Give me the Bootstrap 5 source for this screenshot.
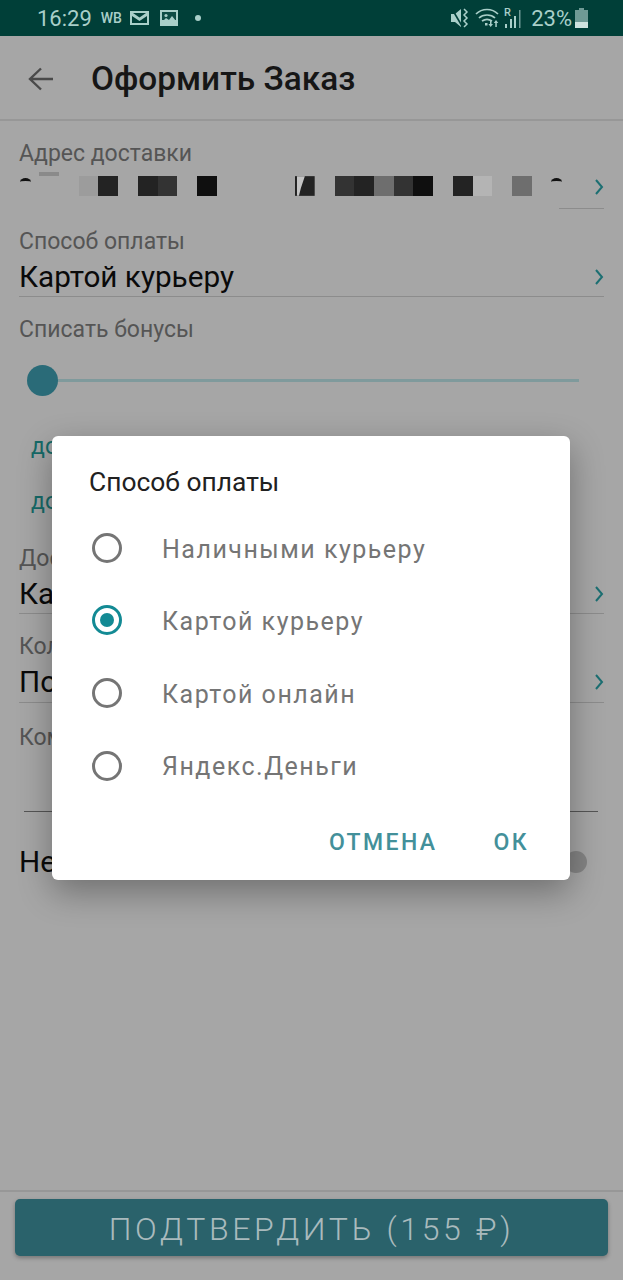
<!DOCTYPE html>
<html lang="ru">
<head>
    <meta charset="UTF-8">
    <meta name="viewport" content="width=device-width, initial-scale=1.0">
    <title>Оформить Заказ</title>
    <link href="https://cdn.jsdelivr.net/npm/bootstrap@5.3.0/dist/css/bootstrap.min.css" rel="stylesheet">
    <style>
        html, body { height: 1280px; overflow: hidden; }
        body { background-color: #a6a6a6; font-family: Roboto, "Liberation Sans", sans-serif; position: relative; }

        .status-bar { height: 36px; background-color: #003f38; color: #a9cfc9; padding: 0 35px 0 37px; }
        .status-time { font-size: 22px; margin-right: 9px; }
        .status-wb { font-size: 14px; font-weight: 500; margin-right: 8px; }
        .status-pct { font-size: 22px; margin-right: 3px; }
        .status-dot { width: 6px; height: 6px; background: #a9cfc9; margin-left: 17px; }
        .status-mail { margin-right: 11px; }
        .status-mute { margin-right: 6px; }
        .status-wifi { margin-right: 5px; }
        .status-signal { margin-right: 10px; }

        .top-bar { height: 85px; padding-left: 28px; padding-top: 3px; border-bottom: 2px solid #979797; }
        .top-title { font-size: 33.4px; font-weight: 500; color: #161616; margin-left: 38px; }

        .form-area { padding: 18px 19px 0; position: relative; }
        .field { height: 70px; margin-bottom: 18px; }
        .field-label { font-size: 23px; line-height: 30px; color: #555; }
        .field-value { font-size: 29.7px; line-height: 36px; color: #0a0a0a; margin-top: 2px; }
        .field-line { border-bottom: 1px solid #8c8c8c; }
        .short-line { width: 45px; margin-left: auto; }

        .pixel-row { height: 36px; margin: 3px 0 0 .7px; padding-top: 4px; }
        .pixel { flex: 0 0 19.7px; height: 20px; }
        .px-black { background: #0f0f0f; }
        .px-dark { background: #232323; }
        .px-mid { background: #333; }
        .px-gray { background: #6e6e6e; }
        .px-pale { background: #9c9c9c; }
        .px-light { background: #b4b4b4; }
        .frag-arc { display: block; width: 11px; height: 8px; margin-top: 2px; border-top: 3px solid #111; border-radius: 50%; }
        .pixel-dash { position: absolute; left: 39px; top: 51px; width: 20px; height: 4px; background: #8a8a8a; }

        .chevron { width: 9px; height: 16px; margin-left: auto; }
        .pixel-row .chevron { margin-top: 3px; }

        .slider-box { height: 31px; margin: 20px 25px 0 8px; position: relative; }
        .slider-track { position: absolute; left: 15px; right: 0; top: 14px; height: 3px; background: #7f9a9c; }
        .slider-thumb { position: absolute; left: 0; top: 0; width: 31px; height: 31px; border-radius: 50%; background: #2a6b78; }

        .link-text { font-size: 23px; line-height: 30px; color: #166a68; margin-left: 12px; }
        .link-first { margin-top: 36px; }
        .link-next { margin-top: 25px; }
        .field-after-links { margin-top: 27px; }
        .field-last { height: 71px; margin-bottom: 20px; }
        .comment-line { height: 1px; background: #555; margin: 58px 6px 0 5px; }
        .switch-row { margin-top: 35px; height: 30px; }
        .switch-knob { width: 22px; height: 22px; margin-left: auto; margin-right: 17px; border-radius: 50%; background: #848484; }

        .bottom-bar { position: absolute; left: 0; right: 0; bottom: 0; height: 90px; border-top: 2px solid #979797; padding: 7px 15px 0; }
        .confirm-btn { width: 100%; height: 57px; font-size: 32px; font-weight: 300; letter-spacing: 3.65px; border: 0; border-radius: 5px; box-shadow: 0 2px 4px rgba(0,0,0,.3); }
        .confirm-btn:disabled { background: #2a626b; color: #a9babd; opacity: 1; }

        .pay-dialog { position: absolute; left: 52px; top: 436px; width: 518px; height: 444px; border-radius: 6px; box-shadow: 0 12px 34px rgba(0,0,0,.33); padding: 28px 37px 0; }
        .dialog-title { font-size: 26.4px; line-height: 36px; color: #212121; }
        .option-list { margin-top: 13px; }
        .pay-option { height: 72.6px; }
        .pay-option svg { width: 30px; height: 30px; margin: -3px 40px 0 3px; }
        .pay-option span { font-size: 25px; letter-spacing: 1.5px; color: #757575; }
        .dialog-actions { margin-top: 25px; padding-right: 4px; gap: 56px; }
        .dialog-btn { font-size: 23px; font-weight: 500; letter-spacing: 2.4px; color: #43909a; padding: 0; border: 0; line-height: 30px; }
    </style>
</head>
<body>

    <!-- status bar -->
    <div class="status-bar d-flex align-items-center">
        <span class="status-time">16:29</span>
        <span class="status-wb">WB</span>
        <svg class="status-mail" width="19" height="14" viewBox="0 0 19 14"><path fill="#a9cfc9" fill-rule="evenodd" d="M0 0h19v14H0zM2 5v7h15V5l-7.500 5zM3 2l6.500 4.500L16 2z"/></svg>
        <svg width="18" height="16" viewBox="0 0 18 16"><rect width="18" height="16" fill="#a9cfc9"/><rect x="2" y="2" width="14" height="8" fill="#0f4d46"/><circle cx="6" cy="5.500" r="1.600" fill="#a9cfc9"/><path fill="#a9cfc9" d="M2 12l4-4 3 2 3-4 4 5v3H2z"/></svg>
        <span class="rounded-circle status-dot"></span>
        <div class="ms-auto d-flex align-items-center">
            <svg class="status-mute" width="18" height="20" viewBox="0 0 18 20"><path fill="#a9cfc9" d="M0 6h4l6-5v18l-6-5H0z"/><path fill="none" stroke="#a9cfc9" stroke-width="1.500" d="M13 1l3 3-3 3 3 3-3 3 3 3-3 3"/><path stroke="#003f38" stroke-width="1.600" d="M1 1l10 17"/></svg>
            <svg class="status-wifi" width="24" height="20" viewBox="0 0 24 20"><g fill="none" stroke="#a9cfc9" stroke-width="1.700"><path d="M1 6c6-6 16-6 22 0"/><path d="M4 10c4-4 12-4 16 0"/><path d="M7 13c3-2 7-2 10 0"/></g><path fill="#a9cfc9" d="M10 15h2.500v2.500H10zM15 12h1.500v4H18l-2.300 3-2.300-3H15zM21 12l2.300 3h-1.500v4h-1.500v-4h-1.500z"/></svg>
            <svg class="status-signal" width="17" height="22" viewBox="0 0 17 22"><text x="0" y="9" font-size="11" font-family="Roboto" font-weight="500" fill="#a9cfc9">R</text><path fill="#a9cfc9" d="M1 17h2v4H1zM6 12h2v9H6zM10 9h2v12h-2z"/><path fill="#6f9a95" d="M15 3h1.500v18H15z"/></svg>
            <span class="status-pct">23%</span>
            <svg width="13" height="20" viewBox="0 0 13 20"><path fill="#6f9a95" d="M4 0h5v2h4v18H0V2h4z"/><path fill="#cfe3df" d="M0 14h13v6H0z"/></svg>
        </div>
    </div>

    <!-- toolbar -->
    <div class="top-bar d-flex align-items-center">
        <svg width="25" height="24" viewBox="0 0 25 24"><path fill="none" stroke="#4a4a4a" stroke-width="2.400" d="M25 12H3M13 1.500L2 12l11 10.500"/></svg>
        <span class="top-title">Оформить Заказ</span>
    </div>

    <!-- form -->
    <div class="form-area">
        <span class="pixel-dash"></span>
        <div class="field">
            <div class="field-label">Адрес доставки</div>
            <div class="pixel-row d-flex align-items-start">
                <span class="pixel"><span class="frag-arc"></span></span><span class="pixel"></span><span class="pixel"></span>
                <span class="pixel px-pale"></span><span class="pixel px-dark"></span><span class="pixel"></span>
                <span class="pixel px-dark"></span><span class="pixel px-mid"></span><span class="pixel"></span>
                <span class="pixel px-black"></span><span class="pixel"></span><span class="pixel"></span>
                <span class="pixel"></span><span class="pixel"></span>
                <svg class="pixel" viewBox="0 0 20 20"><rect width="20" height="20" fill="#232323"/><path fill="#c4c4c4" d="M2 0h8L6 12l-2 8H2z"/></svg>
                <span class="pixel"></span><span class="pixel px-mid"></span><span class="pixel px-dark"></span>
                <span class="pixel px-gray"></span><span class="pixel px-mid"></span><span class="pixel px-black"></span>
                <span class="pixel"></span><span class="pixel px-dark"></span><span class="pixel px-light"></span>
                <span class="pixel"></span><span class="pixel px-gray"></span><span class="pixel"></span>
                <span class="pixel"><span class="frag-arc"></span></span>
                <svg class="chevron" viewBox="0 0 9 16"><path fill="none" stroke="#1c6f72" stroke-width="2" d="M1 1l6 7-6 7"/></svg>
            </div>
            <div class="field-line short-line"></div>
        </div>
        <div class="field field-line">
            <div class="field-label">Способ оплаты</div>
            <div class="field-value d-flex align-items-center">Картой курьеру
                <svg class="chevron" viewBox="0 0 9 16"><path fill="none" stroke="#1c6f72" stroke-width="2" d="M1 1l6 7-6 7"/></svg>
            </div>
        </div>
        <div class="field-label">Списать бонусы</div>
        <div class="slider-box">
            <div class="slider-track"></div>
            <div class="slider-thumb"></div>
        </div>
        <div class="link-text link-first">до</div>
        <div class="link-text link-next">до</div>
        <div class="field field-line field-after-links">
            <div class="field-label">Дос</div>
            <div class="field-value d-flex align-items-center">Ка
                <svg class="chevron" viewBox="0 0 9 16"><path fill="none" stroke="#1c6f72" stroke-width="2" d="M1 1l6 7-6 7"/></svg>
            </div>
        </div>
        <div class="field field-line field-last">
            <div class="field-label">Кол</div>
            <div class="field-value d-flex align-items-center">По
                <svg class="chevron" viewBox="0 0 9 16"><path fill="none" stroke="#1c6f72" stroke-width="2" d="M1 1l6 7-6 7"/></svg>
            </div>
        </div>
        <div class="field-label">Ком</div>
        <div class="comment-line"></div>
        <div class="switch-row field-value d-flex align-items-center">Не
            <span class="switch-knob"></span>
        </div>
    </div>

    <!-- bottom button -->
    <div class="bottom-bar">
        <button type="button" class="btn confirm-btn" disabled>ПОДТВЕРДИТЬ (155 ₽)</button>
    </div>

    <!-- dialog -->
    <div class="pay-dialog bg-white">
        <div class="dialog-title">Способ оплаты</div>
        <div class="option-list">
            <div class="pay-option d-flex align-items-center">
                <svg viewBox="0 0 30 30"><circle cx="15" cy="15" r="13.500" fill="none" stroke="#757575" stroke-width="3"/></svg>
                <span>Наличными курьеру</span>
            </div>
            <div class="pay-option d-flex align-items-center">
                <svg viewBox="0 0 30 30"><circle cx="15" cy="15" r="13.500" fill="none" stroke="#138a94" stroke-width="3"/><circle cx="15" cy="15" r="7" fill="#138a94"/></svg>
                <span>Картой курьеру</span>
            </div>
            <div class="pay-option d-flex align-items-center">
                <svg viewBox="0 0 30 30"><circle cx="15" cy="15" r="13.500" fill="none" stroke="#757575" stroke-width="3"/></svg>
                <span>Картой онлайн</span>
            </div>
            <div class="pay-option d-flex align-items-center">
                <svg viewBox="0 0 30 30"><circle cx="15" cy="15" r="13.500" fill="none" stroke="#757575" stroke-width="3"/></svg>
                <span>Яндекс.Деньги</span>
            </div>
        </div>
        <div class="dialog-actions d-flex justify-content-end">
            <button type="button" class="btn dialog-btn">ОТМЕНА</button>
            <button type="button" class="btn dialog-btn">ОК</button>
        </div>
    </div>

    <script src="https://cdn.jsdelivr.net/npm/bootstrap@5.3.0/dist/js/bootstrap.bundle.min.js"></script>
</body>
</html>
